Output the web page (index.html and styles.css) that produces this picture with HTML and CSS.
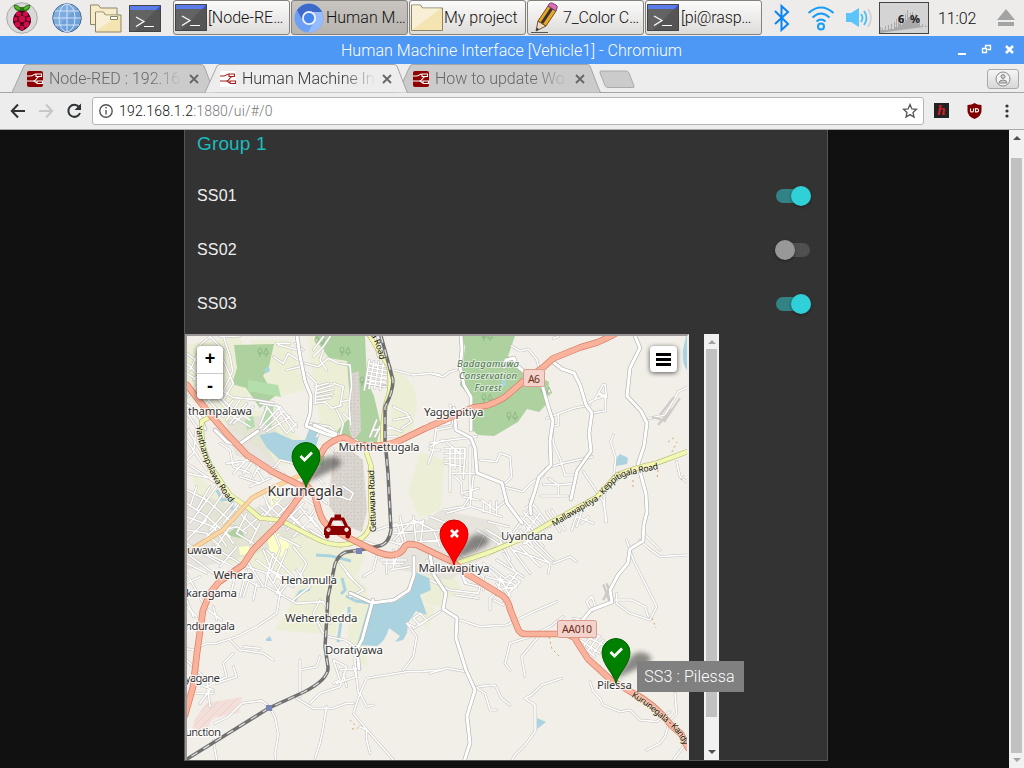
FILE: index.html
```html
<!DOCTYPE html>
<html lang="en">
<head>
<meta charset="utf-8">
<title>Human Machine Interface [Vehicle1]</title>
<link rel="stylesheet" href="styles.css">
</head>
<body>
<svg class="sprites" width="0" height="0">
  <symbol id="terminal" viewBox="0 0 32 27"><path fill="#555" d="M0 0h32v27H0z"/><path fill="#636363" d="M0 0h32L5 27H0z"/><path fill="#3955bd" d="M0 0h32v5H0z"/><path fill="#5a7bea" d="M0 0h32l-5 5H0z"/><path d="M.5.5h31v26H.5z" fill="none" stroke="#444"/><path d="M7 12l8 4.500-8 5M15 21.500h10" fill="none" stroke="#fff" stroke-width="1.200"/></symbol>
  <symbol id="nodered" viewBox="0 0 16 16"><path d="M0 5h3c4 0 3-2 6-2M3 10h3c5 0 2-4.500 7-4.500M6 10c2 0 2 1.500 4 1.500M9 3h5.500v2.500H9zM10 10h5.500v2.500H10zM0 10h4" fill="none" stroke="currentColor" stroke-width="1.100"/></symbol>
  <symbol id="tabshape" viewBox="0 0 204 29"><path d="M0 28.500h1L13 2q.8-1.500 3-1.500h174q2 0 3 1.500l10 26.500z" fill="currentColor"/><path d="M0 28.500h1L13 2q.8-1.500 3-1.500h174q2 0 3 1.500l10 26h1" fill="none" stroke="#a5a5a5"/></symbol>
</svg>

<header class="taskbar">
  <div class="launchers">
    <svg width="32" height="32" viewBox="0 0 32 32"><circle cx="16" cy="16" r="15.300" fill="#d9d9d9" stroke="#aaa"/><path d="M16 9Q9 10 8 5l8 0 8 0q-1 5-8 4z" fill="#2f7d18"/><path d="M15 8C12 9 8 7 8 3q6 0 7 5zM17 8c3 1 7-1 7-5q-6 0-7 5z" fill="#58b52b" stroke="#174d0d" stroke-width=".7"/><path d="M16 9c5-1 9 4 9 10 0 5-6 9-9 10-3-1-9-5-9-10C7 13 11 8 16 9z" fill="#48001a"/><g fill="#d20b49"><circle cx="16" cy="17" r="3.200"/><circle cx="12.500" cy="12" r="2.600"/><circle cx="19.500" cy="12" r="2.600"/><circle cx="9.500" cy="17" r="2.300"/><circle cx="22.500" cy="17" r="2.300"/><circle cx="11.500" cy="22.500" r="2.900"/><circle cx="20.500" cy="22.500" r="2.900"/><circle cx="16" cy="26" r="2.300"/></g></svg>
    <svg class="globe" width="30" height="30" viewBox="0 0 30 30"><circle cx="15" cy="15" r="14.300" fill="#6d9fd9" stroke="#4a6b8f"/><path d="M5 25Q-2 14 5 5Q15-3 25 5z" fill="#8cb6e4" opacity=".55"/><g fill="none" stroke="#dceafa" stroke-width=".9"><ellipse cx="15" cy="15" rx="8" ry="14"/><path d="M15 1v28M1 15h28M3 8h24M3 22h24"/></g></svg>
    <svg class="files" width="32" height="29" viewBox="0 0 32 29"><path d="M.5 20.500V1h8l2 3H27v17z" fill="#f6ecca" stroke="#8c8564"/><path d="M5.500 28V8h8l2 3H31v17z" fill="#f3e4b2" stroke="#8c8564"/><path d="M6 27V8.500h7l2 3h13z" fill="#f8f0d6"/><path d="M20.500 12.500h7v3h-7z" fill="#fff" stroke="#8c8564"/></svg>
    <svg width="32" height="27"><use href="#terminal"/></svg>
  </div>
  <nav class="tasks">
    <div class="task"><svg width="32" height="27"><use href="#terminal"/></svg><span>[Node-RE…</span></div>
    <div class="task current"><svg class="chromium" width="30" height="30" viewBox="0 0 30 30"><circle cx="15" cy="15" r="14.500" fill="#6ba0f5"/><path d="M3 7A14.500 14.500 0 0 1 28 9H15L9 18z" fill="#3d69c9"/><path d="M28 9A14.500 14.500 0 0 1 14 29.500L21 17 19 9z" fill="#95bcff"/><circle cx="15" cy="15" r="7" fill="#f2f5fb"/><circle cx="15" cy="15" r="5.200" fill="#4684ee"/></svg><span>Human M…</span></div>
    <div class="task"><svg width="32" height="27" viewBox="0 0 32 27"><path d="M.5 26.500V1h9l2 3h20v22.500z" fill="#f3e4b2" stroke="#8c8564"/><path d="M1 26V1.500h8l2 3h19z" fill="#f8f0d6"/></svg><span>My project</span></div>
    <div class="task"><svg class="pencil" width="32" height="31" viewBox="0 0 32 31"><path d="M2 30.500h17" stroke="#555"/><path d="M7 29l2-10 8 5z" fill="#f3dcbd" stroke="#665544"/><path d="M9 19L19 4l8 5-10 15z" fill="#eba628" stroke="#70501a"/><path d="M13 21L23 6" stroke="#333" stroke-width="3"/><path d="M19 4l1-2q1-1.500 3-1l4 2q2 1 1 3l-1 3z" fill="#d96eb2" stroke="#80436e"/><path d="M7 29l1-3 2 1z" fill="#222"/></svg><span>7_Color C…</span></div>
    <div class="task"><svg width="32" height="27"><use href="#terminal"/></svg><span>[pi@rasp…</span></div>
  </nav>
  <div class="tray">
    <svg class="bt" width="16" height="28" viewBox="0 0 16 28"><path d="M1 7l13 13-6.500 6V2L14 8 1 20" fill="none" stroke="#0b84f5" stroke-width="2"/></svg>
    <svg class="wifi" width="28" height="26" viewBox="0 0 28 26" fill="none" stroke="#189df5" stroke-width="2"><path d="M1.500 8q12.500-11 25 0M5.500 12.500q8.500-8 17 0M9.500 16.500q4.500-4 9 0"/><circle cx="14" cy="21.500" r="3"/></svg>
    <svg class="sound" width="27" height="22" viewBox="0 0 27 22" fill="none"><path d="M0 6h5l8-5v19l-8-5H0z" fill="#5bc4fa"/><path d="M15 7q3 4 0 8M18 4q5 7 0 14" stroke="#4bbcf5" stroke-width="1.800"/><path d="M22 2q6 9 0 18" stroke="#d2d2d2" stroke-width="1.800"/></svg>
    <div class="cpu"><svg width="48" height="30" viewBox="0 0 48 30"><path d="M0 30v-6h1v3h1v-2h1v2h2v-4h1v4h2v-5h1v4h2v-5h1v5h2v-7h1v5h1v-8h1v8h1v-10h1v7h1v-9h1v10h1v-7h2v4h1v-8h1v6h1v-10h1v7h2v-4h1v6h1v-7h1v6h2v-4h1v6h1v-3h1v7h1v-6h1v8h2v-2h1v3h2v-2h1v1h3z" fill="#aaa"/></svg><b>6 &nbsp;%</b></div>
    <time>11:02</time>
    <svg class="eject" width="18" height="18" viewBox="0 0 18 18" fill="#a3a3a3"><path d="M9 0l9 11H0zM1 13h16v4H1z"/></svg>
  </div>
</header>

<div class="titlebar"><h1>Human Machine Interface [Vehicle1] - Chromium</h1>
  <svg width="58" height="12" viewBox="0 0 58 12" fill="none" stroke="#fff"><path d="M1 10h8" stroke-width="2"/><path d="M25.500 4.500h4v4h-4zM28.500 4v-2.500h5v4h-3" stroke-width="1.300"/><path d="M49 2l7 7M56 2l-7 7" stroke-width="2.500"/></svg>
</div>

<div class="tabs">
  <div class="tab"><svg class="shape" width="204" height="29"><use href="#tabshape"/></svg><svg class="fav" width="16" height="16"><use href="#nodered"/></svg><span>Node-RED : 192.16</span><svg class="x" width="10" height="10" viewBox="0 0 10 10"><path d="M1 1l8 8M9 1L1 9"/></svg></div>
  <div class="tab active"><svg class="shape" width="204" height="29"><use href="#tabshape"/></svg><svg class="fav" width="16" height="16"><use href="#nodered"/></svg><span>Human Machine In</span><svg class="x" width="10" height="10" viewBox="0 0 10 10"><path d="M1 1l8 8M9 1L1 9"/></svg></div>
  <div class="tab"><svg class="shape" width="204" height="29"><use href="#tabshape"/></svg><svg class="fav" width="16" height="16"><use href="#nodered"/></svg><span>How to update Wo</span><svg class="x" width="10" height="10" viewBox="0 0 10 10"><path d="M1 1l8 8M9 1L1 9"/></svg></div>
  <svg class="newtab" width="36" height="19" viewBox="0 0 36 19"><path d="M2 1h25q2 0 3 2l5 13q.5 1.500-1 1.500H9q-2 0-3-2L1 3Q.500 1 2 1z" fill="#cbcbcb" stroke="#aaa"/></svg>
  <div class="profile"><svg width="16" height="16" viewBox="0 0 16 16" fill="#f2f2f2" stroke="#888"><circle cx="8" cy="8" r="7"/><circle cx="8" cy="5.500" r="2" fill="#ccc"/><path d="M4 12q0-3 4-3t4 3z" fill="#ccc"/></svg></div>
</div>

<div class="toolbar">
  <svg width="74" height="18" viewBox="0 0 74 18" fill="none" stroke-width="2"><path d="M15 9H2M8 2.500L1.800 9 8 15.500" stroke="#2e3436"/><path d="M29 9h13M36 2.500L42.200 9 36 15.500" stroke="#c6c8c9"/><path d="M69 5A6 6 0 1 0 70 11" stroke="#2e3436"/><path d="M71 1.500v6.500h-6.500z" fill="#2e3436"/></svg>
  <div class="url"><svg width="14" height="14" viewBox="0 0 14 14" fill="none" stroke="#555" stroke-width="1.400"><circle cx="7" cy="7" r="6.200"/><path d="M7 6v4.500M7 3v1.600"/></svg><p>192.168.1.2<span>:1880/ui/#/0</span></p><svg width="16" height="16" viewBox="0 0 16 16"><path d="M8 1.500l1.900 4.400 4.600.4-3.500 3.100 1 4.700-4-2.500-4 2.500 1-4.700L1.500 6.300l4.600-.4z" fill="none" stroke="#555" stroke-width="1.300"/></svg></div>
  <div class="hext">h</div>
  <svg class="shield" width="15" height="16" viewBox="0 0 15 16"><path d="M.5 2Q5 2 7.500 0 10 2 14.500 2v6q0 5-7 8-7-3-7-8z" fill="#800000"/><path d="M3.500 5.500v2.200q0 1.300 1.500 1.300t1.500-1.300V5.500M8.500 5.500V9q3.500 0 3-1.800 0-1.700-3-1.700z" fill="none" stroke="#fff" stroke-width="1.100"/></svg>
  <svg width="4" height="14" viewBox="0 0 4 14" fill="#333"><circle cx="2" cy="2" r="1.600"/><circle cx="2" cy="7" r="1.600"/><circle cx="2" cy="12" r="1.600"/></svg>
</div>

<main class="page">
  <section class="group">
    <h2>Group 1</h2>
    <div class="row"><span>SS01</span><i class="switch on"></i></div>
    <div class="row"><span>SS02</span><i class="switch"></i></div>
    <div class="row"><span>SS03</span><i class="switch on"></i></div>
    <div class="embed">
      <div class="map">
<svg class="tiles" width="500" height="424" viewBox="187 336 500 424">
<defs>
  <pattern id="rock" width="7" height="7" patternUnits="userSpaceOnUse"><path d="M0 0h7v7H0z" fill="#dcd6d0"/><path d="M0 1l2 1M4 4l2 1M5 0l-1 2M1 5l1-1M3 6l1 0" stroke="#c4beb9" stroke-width=".8"/></pattern>
  <pattern id="hatch" width="8" height="8" patternUnits="userSpaceOnUse"><path d="M0 0h8v8H0z" fill="#f2dfd9"/><path d="M0 8l8-8" stroke="#efc4be" stroke-width=".6"/></pattern>
  <filter id="blur" x="-50%" y="-50%" width="200%" height="200%"><feGaussianBlur stdDeviation="2.800"/></filter>
  <g id="tree" fill="none" stroke="#86b07d" stroke-width=".8"><ellipse cx="-2" cy="-2" rx="2" ry="3"/><path d="M-2-1v5M4-5l-2.500 6h5zM4 1v3"/></g>
  <g id="pin"><path d="M0 0C-2-10-14-19-14-31A14 14 0 0 1 14-31C14-19 2-10 0 0z" stroke-width="1"/></g>
  <path id="shadow" d="M0 0L17-22Q24-31 34-26T30-14z" fill="#222" opacity=".5" filter="url(#blur)"/>
  <g id="minor">
    <!-- north-west -->
    <g transform="translate(180 330) scale(.33333)">
      <path d="M90 20L60 45M130 18l20 60 8 45-28 60 30 20 60 5 60 10M120 20l60-2M20 70l40 30M20 100l60 60M20 130l80 50 50 50 60 40M40 150l50-50M25 200l40-50M50 210l50-55M75 225l50-55M60 180l70 80M130 90l30 70-30 50M100 190l60 70 50 30M160 210l-30 40M180 210l-40 60M200 220l-50 60M220 230l-60 50M60 60l-30 60M240 220l60 10 50 60M260 235l-20 50M300 230l-60 65M310 245l-60 55M330 260l-70 45M260 230l60 80M290 225l50 80M350 280l-30 30"/>
      <path d="M280 80l30 20 15-30 30 20M320 120l40-10M355 60l-60-15M400 60l30-40M450 20l-20 30-30 30M375 100l40 10 30-25 30 15 35 5 5 60-8 60 5 60M380 130l30 30-5 60 30-5 20 20 30-10M410 180l50-15M410 190l50-12M410 200l48-8M410 210l45-7M405 170l40-10M460 160l30 10-10 60M470 240l20 40-10 40M490 250l20 20M485 215l20-5M390 280l60 10 20 20M430 290l-20 30M290 40l40 0M370 60l-25-20M440 120l-20-30 10-30"/>
      <path d="M565 100l55 10M565 112l55 10M565 124l58 10M562 136l60 12M558 148l60 12M560 160l58 10M568 90l-15 90M582 95l-15 80M596 95l-12 80M610 98l-10 80M640 120l60 15 50-5 30 5M640 270l50-10M625 290l40 15M590 270l-20 50M605 280l-20 40M580 300l60-5M640 230l40 20 15 25-30 20M770 280l-10 80-15 40M780 360l-30 0M620 320l30 0"/>
      <path d="M20 250l30 40-10 80-20 20M25 300l60 100M20 330l60 90M20 400l90 60M20 430l100 20M20 480l60 30 80 70M20 520l60 40 70 60M20 560l80 30 40 60M20 600l60 10 40 40M20 630l60-60M30 580l80-110M60 590l70-100M90 600l70-80M130 580l50-60M50 650l60-60M110 650l40-60M50 470l-20 60M90 470l-40 70M160 640l-30-40 40-10 30 20M200 550l-30 60 50 30M190 600l60-50M240 580l-30 60M170 540l60 60"/>
      <path d="M120 340l30 20 10 50 50 20M140 400l80-10 20 30M160 430l50-50M190 430l30-40M220 440l20-40M250 400l60 30M180 440l60 20M210 470l60-25M230 420l20 30M270 430l30-40 40 10M290 500l50-20 40 30M280 510l80 70M260 520l70 70M240 530l70 60M250 560l60-60M270 580l80-80M300 590l70-70M320 600l60-60M340 620l60-60M360 530l50 60M330 560l60 50M380 510l30 20-20 30 40 50M250 490l20 50M340 580l40 40M390 600l50 30M300 620l60 30M280 600l20 50"/>
      <path d="M410 440l20 20M450 490l60 20 10-20-30-20M400 490l40 30M440 340l20 20M480 350l20 10M590 600l60-20 20 60M640 630l60-60 60 30M660 560l20 90M700 560l10 90M730 570l-10 80M640 610l140-10M650 640l130-10M630 590l100-15M760 600l20 50M130 60l-40-40"/>
    </g>
    <!-- north-east -->
    <g transform="translate(430 330) scale(.33333)">
      <path d="M245 48l25 15 25-5 25 30 8 30M370 25l15-5M0 130l40 10 20-15 20-5M475 218l20-10 30-10-20-10 15-25M495 205l10-12 25 10-5-40M525 195l2 47-42 8M480 225l-50 10-40 15-40 15M385 250l0 35-20 5 5 50 20 45 15 50M488 380l-90 20-50 15-10 25-30 15-30 30-60-15M408 435l25 0M460 425l60 90 10 60M355 445l30 20 45-5M385 465v35M332 498h80M380 465l-40-2M550 315l-8 20 15 50-5 50-30 60 5 80M655 265l50-10 40-70 25-12M690 610M640 610l50 50M740 395l10 45 20 15"/>
      <path d="M0 340l60-10 80-10M0 280l60-5 5-20M10 290l50-10M20 300l45-8M60 225l10 60M0 350l40-20 50 40M45 355l60 0 0 30-60 0M60 355v130M75 355v60M90 355v70M105 355l-5 90M45 370h60M45 400l60 10M65 430h70M120 350v150l-20 30-60 10M75 440l20 20 0 30 50-15M100 500l45 10M150 390l50 5 10-25 30 10 5 60-20 20M130 440l-10 90-70 20M125 530l90 30M160 515v30M180 515v30M200 515v35M225 460M230 510l-35 30-40-30M175 575l60 15M0 560l50 20-10 60"/>
      <path d="M270 560l60 60M280 545l60 60M290 530l60 65M300 510l60 80M310 525l-60 80M330 550l-60 80M345 580l-60 60M350 545l40 60M365 540l40 60M270 600l40 50M290 590l50 60M445 540l-20 60M460 530l-20 60M475 560l-20 20M440 560l50 20M140 600l80 50M170 600l50 30M160 620l-20 40M280 640l60-20"/>
    </g>
    <!-- south-west -->
    <g transform="translate(180 540) scale(.33333)">
      <path d="M20 40l80 60M20 70l60 30M20 100l50 90M20 130l40-20M20 180l20 50M80 40l80 40M100 20l80 50M120 80l50-60M20 10l100 60M200 80l60 20 40 60-10 60-60 40-60 30-60 20-30 0-40 20-50-10M150 300l30 30 70 10 30 20M190 320l50 5M250 30l20 50-15 60M260 30l80 80M280 40l-20 70M300 30l-30 70M320 30l-40 100M270 90l60 30-30 40M230 60l80 60M200 60l50 80M180 110l60 30M200 90l-20 80M230 130l-10 50M210 110l-20 60M170 90l-15 60M260 140l90 50 80-5 20 40M340 20l40 50-20 40M350 90l40 50-50 40M290 110l50 30M310 120l-20 40M160 340l-30 30 10 40-60 30M80 420l10 80M50 430l50 20M40 460l60 0M60 490l30-40M160 380l10 30-60 20M85 210l40 30M100 200l10 40M360 360v110M360 390l50-10 10-30M105 550l40-20 40-40 60-8 25 20 15 30 10 50-10 60 5 50M100 600l10 60M350 475l50 30 60 0 40-15 20 0M390 490l30-30 60-20 20-60-40-20M440 500l-10 60-10 50-15 45M460 360l20 60-20 10M480 390l60-5M490 400l10 40M520 380l10 30-60 20"/>
      <path d="M480 70l40 50 30 30-40 20M500 100l30 30M590 50l-10 40-30 20M620 50v50M640 30v60M660 20l-20 60M600 60h80M610 70h60M630 90l60 -10M445 290l50 10 30 20 0 50 10 90M540 460l-20 60 50 60 70 80M540 460l20 40 20-5M540 460l20-45 60-10 60-10 40 0 60-5M700 260l-20-10 30 40-10 60-30 40M700 265l80-50M700 235l20-15 20 20-20 15zM570 640l-10-40 0-30-20-10M420 180l-20 40 30 60M430 230l20 20M20 200l30 30M20 360l60 60M620 0l60 20M740 60l20 40 20 20M540 0l60 20"/>
    </g>
    <!-- south-east -->
    <g transform="translate(430 540) scale(.33333)">
      <path d="M0 120l60 30 85 10 5-20-45-10-10-30M90 90l20 40M75 165l70 10M90 240l60 20 80-5 80-40 70-30M180 210l0-35 20-20M190 180l30 15 20-40 30-30-30-20-30 20-10 40M170 110l70 20M200 150l60-10M200 130l40 60M210 110l30 60M0 400l50-15 60 10M135 440l30 20 15 50 20 0M145 440l50-5 20 40 25 20M395 415l-60 20-30 30-20 10 30 20 0 80-30 40-30 30-15 25M325 290l-50 60 10 60M400 230l-40 30-60 30-60 20-15 60 15 20M480 425l10 30 20 20 10 20 50 20 30-5 30 30 50 5 40-30M735 460l5 60-20 20-15 50-15 20-40 20M760 620l-30 40M630 0l20 20 40 30 80-5M590 0l20 60 40 80 30 60-20 40-60-20-40-30 0-30M555 180l50 0 40 20 10 30M480 205l-10-20 15-15 10 25-10 20M250 30l60 20 50 20M270 20l60 60M290 10l70 60M310 0l60 60M220 40l40 60-30 40M240 20l60 80M200 60l80 50M360 70l-5 30M370 70l50-20 20 15M160 70l60 60M170 50l40-40M180 80l80 60M210 0l30 60M120 70l40 40 0 40M60 20l60 40"/>
      <path d="M450 300l60 40M460 285l60 30M445 310l50 40M490 280l-30 40M505 290l-30 40M520 300l-30 40M440 240l10 20 60 30M430 235l25 5"/>
    </g>
  </g>
  <g id="tertiary">
    <path d="M297 336l3 20 5 25 6 15-1 18-4 12 20 8 18 5 13 2M215 430l12 12 11 3 20-14M461 336l1 14-2 17 4 18 7 12v33M454 408l2 22 15 8 4 10 2 25 25 10 5 20 15 20M504 367l2-7 8-2 2 7 12 10 13 6 8 28 4 12-3 20 1 24-12 12-4 14-5 15 1 8M553 362l9 7 12 4 6 12 6 20 6 8-3 20 2 18-14 20-6 28M635 336l5 12-10 20-3 28 14 15 6 12-3 23-6 18 8 30 1 18-3 12-1 17-13 8-2 14-10 12-8 15 2 12-21 8-10 12"/>
    <path d="M430 555l4 20 12 18-3 16 14 9-1 20 10 32 9 20-8 26 3 27-7 22-3 15M414 557v18l-5 15-15 10-22 3-22-10M373 600l-11 40-5 9 2 20M336 434l-22-9M187 405l13 12 5 12M374 336l5 20"/>
  </g>
  <path id="primary" d="M187 385l21 27 20 23 19 20 26 17 30 15M306 482l10-20 9-15q10-9 20-9.500 8 5 12 7 25 4 43-4l25-12 48-21 14-2q16-6 21-11l15-13 20-14 10-9 27-11 17-5q16-7 20-10M302 493l-22 30-27 27-10 15-24 17-9 11-7 17-6 43-4 34-8 28M306 485l8 8 5 18q4 13 11 16l13 8 30 15q12 6 20 5 9-1 12-9l4-2 8 1 23 11 13 6 14 12 36 22q6 6 7 13l8 20q2 5 8 5h33q16 0 18 8l11 17 23 21 20 12q22 10 40 33l10 9 7 14"/>
  <path id="yellow" d="M210 417l-8 4q-3 30 15 55l13 19 17 12 13 11 20 2 33 17q28 15 49 1 12-9 9-29v-43l-5-15M370 336l19 31q3 20-1 30-6 18-5 44M454 564l36-12 36-15 24-14 47-26 20-22q20-8 40-12l32-12"/>
  <path id="secondary" d="M187 552l36-22 29-32 15-8 39-17"/>
  <path id="rail" d="M381 336l12 44q0 12-8 27v33l3 33 3 57q-2 14-12 16l-19 4-14 2q-7 2-11 12l-7 33-3 50 3 20q1 12-24 25l-35 16-82 51"/>
  <path id="l1" d="M198 426Q203 468 233 503"/>
  <path id="l2" d="M370 330q10 15 12 33"/>
  <path id="l3" d="M374 532L372 469"/>
  <path id="l4" d="M553 525l47-28q10-16 25-23l42-9"/>
  <path id="l5" d="M632 695q16 9 30 22 20 14 25 32"/>
</defs>
<path fill="#f2efe9" d="M187 336h500v424H187z"/>
<path fill="#ecefd5" d="M187 345l52-9 18 35-15 40 30 0 40 40-30 15-95-70zM307 336h50v100l-35 0zM392 370q35 10 20 60l-22 25zM420 452l25 8-5 50-20 8-12-25zM190 470l60 50 80 25-40 30-75-15zM315 540l50 15-30 80-60-5 15-25zM345 568l22 20v80l-18-15zM424 575l30 2 8 12-25 18-15-5zM410 600l25 8-8 22zM250 340l40 0 15 50-40 10zM650 336"/>
<path fill="#dedbd6" opacity=".55" d="M187 490l60 20 50-15 5 40-50 20-65 15zM225 420l40-5 15 20-15 10 15 25-45-15zM400 540l40-30 50 10 20 20-60 40-50-10z"/>
<g fill="#aed1a0"><path d="M234 345l40-1-5 22-6 10 12 20-15 12-14-20-14-4 5-16zM315 336h50l2 45 7 15 7 30-5 20-27 0-12-15 14-15-4-55-18-3-13-18zM462 336h53l-7 20 15 12 26 14-2 22-8 8-12-3-9 13-24 14-16-1-9-8 1-30-10-12 5-38zM225 535l15-10 5 14z"/><path fill="#b4dfac" d="M248 380l30 5 3 12-33-6zM245 420l8-5 2 12-8 3zM264 407l10-2-3 25-8-8zM320 455l5 1-2 10-6-2z"/></g>
<path fill="url(#rock)" d="M350 374l9-3 2 60-8 10-4-12zM333 452l18-2 12 10 4 50-5 22-20-8-13-18 2-30z"/>
<g fill="#aad3df"><path d="M259 435l16-3 18 8 12 0 5-13 10 5-6 22-14 12-21-7-12-11zM415 572l14 6 2 12-11 5 7 20-11-4-8 12-1 10-4 7-8 2 5-6-11-8q-4 14-12 18l-20-1 13-45 20 3q20-6 22-20zM615 460l5-6 8 4-1 6-11 2zM537 718l9 4-9 7zM683 350l4-18v38q-5-5-4-20zM265 368l4-1 1 4-5 3zM502 380h4v6h-4zM266 639l4-3 2 5-6 0z"/><path d="M316 555l15 1 20 5M342 578l3 12-4 4M346 596l10 5 14 2M349 607v10M341 622l-3 20M294 602l6-10 10-3M217 490l5 10 10-2v12" fill="none" stroke="#aad3df" stroke-width="3"/></g>
<path fill="#ffffc8" d="M267 536l12-2 10 10-4 14-15-7zM271 496l8 0 1 8-9 3zM239 547l10-1 1 8-10 1z"/><path fill="url(#hatch)" d="M194 720l13-17 35-6-3 16-26 5-9 16-11-4z"/>
<use href="#tree" x="262" y="353"/><use href="#tree" x="344" y="352"/><use href="#tree" x="319" y="342"/><use href="#tree" x="364" y="382"/><use href="#tree" x="486" y="399"/><use href="#tree" x="511" y="417"/><use href="#tree" x="545" y="392"/><use href="#tree" x="486" y="337"/>
<use href="#minor" class="road minor-case"/><use href="#minor" class="road minor-fill"/>
<path d="M520 133l20 55M530 130l18 52M540 140l-20 40" transform="translate(430 540) scale(.33333)" fill="none" stroke="#ccc9c5" stroke-width="7"/>
<path d="M660 415l14-18M664 422l16-24M658 425l14-16M652 417l14 4" fill="none" stroke="#cfccc8" stroke-width="2.200"/>
<use href="#tertiary" class="road ter-case"/><use href="#tertiary" class="road ter-fill"/>
<use href="#yellow" class="road yel-case"/><use href="#yellow" class="road yel-fill"/>
<use href="#secondary" class="road sec-case"/><use href="#secondary" class="road sec-fill"/>
<use href="#rail" class="road rail"/><use href="#rail" class="road rail-dash"/>
<use href="#primary" class="road pri-case"/><use href="#primary" class="road pri-fill"/>
<path fill="#7b85b5" d="M356 548h6v6h-6zM266 705h6v6h-6z"/>
<path d="M668 442l8-6M672 452l5-10M658 470l-1 10M681 480l3-5M633 480v8M549 637l3 12 7 7M652 618l4 10M350 720l5 5M352 729l6-1" stroke="#cfa76b" stroke-dasharray="2 3" fill="none"/>
<g class="shieldlabel"><rect x="523.500" y="369.500" width="21" height="17" rx="2"/><text x="534" y="382.500" textLength="12">A6</text><rect x="557.500" y="620.500" width="39" height="17" rx="2"/><text x="577" y="633" textLength="30">AA010</text></g>
<g class="roadname"><text><textPath href="#l1" textLength="84">Yanthampalawa Road</textPath></text><text><textPath href="#l2" textLength="32">ya Road</textPath></text><text><textPath href="#l3" textLength="62">Gettuwana Road</textPath></text><text><textPath href="#l4" textLength="123">Mallawapitiya - Keppitigala Road</textPath></text><text><textPath href="#l5" textLength="74">Kurunegala - Kandy</textPath></text></g>
<g class="forest"><text x="488" y="367" textLength="62">Badagamuwa</text><text x="488" y="379" textLength="58">Conservation</text><text x="488" y="391" textLength="27">Forest</text></g>
<g class="place">
<text x="188" y="415" textLength="64">thampalawa</text><text x="338.500" y="451" textLength="81">Muththettugala</text><text x="424" y="415.500" textLength="59.500">Yaggepitiya</text><text x="267.500" y="495.500" textLength="75.500" class="town">Kurunegala</text>
<text x="187" y="553.500" textLength="35">uwawa</text><text x="213.500" y="579" textLength="40">Wehera</text><text x="186" y="596.500" textLength="51">karagama</text><text x="281" y="584" textLength="56">Henamulla</text><text x="185" y="630" textLength="50">nduragala</text><text x="285" y="622" textLength="72.500">Weherebedda</text><text x="325" y="654" textLength="58">Doratiyawa</text><text x="185" y="681.500" textLength="35">yagane</text><text x="185" y="736" textLength="36">unction</text><text x="418.500" y="572" textLength="71">Mallawapitiya</text><text x="501" y="540" textLength="52">Uyandana</text><text x="597" y="688.500" textLength="35">Pilessa</text></g>
<use href="#shadow" x="303" y="484"/><use href="#shadow" x="451" y="562"/><use href="#shadow" x="613" y="680"/>
<g fill="#008000" stroke="#006000"><use href="#pin" x="306" y="487.500"/><use href="#pin" x="616" y="683.500"/></g><use href="#pin" x="454" y="565" fill="red" stroke="#d00000"/>
<g fill="none" stroke="#fff" stroke-width="2.700"><path d="M300.500 456l4 4 7.500-7.500M610.500 652l4 4 7.500-7.500M451 530l7 7M458 530l-7 7"/></g>
<path fill="#8b0000" fill-rule="evenodd" d="M334.500 514.500h6.500v3h3l4 8.500q3 1 3 4v5h-1v2q-.5 1.500-2.200 1.500t-2.300-1.500v-2h-16v2q-.5 1.500-2.300 1.500t-2.200-1.500v-2h-1v-5q0-3 3-4l4-8.500h3.500zM333 520.500l-2.500 5.500h14l-2.500-5.500zM328.500 527.500a2.200 2.200 0 1 0 .1 0M346.500 527.500a2.200 2.200 0 1 0 .1 0"/>
</svg>
        <div class="zoom"><b>+</b><b>-</b></div>
        <div class="layers"><i></i><i></i><i></i></div>
        <div class="tip">SS3 : Pilessa</div>
      </div>
      <div class="scroll inner"><i class="up"></i><div class="thumb"></div><i class="down"></i></div>
    </div>
  </section>
  <div class="scroll outer"><i class="up"></i><div class="thumb"></div><i class="down"></i></div>
</main>
</body>
</html>
```
FILE: styles.css
```css
* { box-sizing: border-box; }
body { margin: 0; width: 1024px; height: 768px; overflow: hidden; display: flex; flex-direction: column; font-family: Roboto, sans-serif; font-weight: 300; font-size: 16px; background: #111; }
svg { display: block; flex: none; }
h1, h2, p { margin: 0; font-weight: inherit; }
.sprites { position: absolute; }

.taskbar { height: 36px; flex: none; display: flex; background: #edeceb; color: #111; }
.launchers { display: flex; align-items: center; width: 173px; padding-left: 6px; }
.globe { margin-left: 14px; }
.files { margin: 0 7px 0 8px; }
.tasks { display: flex; gap: 1px; }
.task { width: 117px; height: 35px; display: flex; align-items: center; border: 1px solid #85817c; border-radius: 3px; background: linear-gradient(#fbfbfb, #dedcd9); padding-left: 1px; white-space: nowrap; font-size: 16px; }
.task span { margin-left: 1px; }
.task.current { background: linear-gradient(#c8c5c1, #b8b4af); }
.task:nth-child(n+4) span { margin-left: 2px; letter-spacing: -.15px; }
.chromium { margin: 0 1px; }
.tray { display: flex; align-items: center; padding-left: 12px; flex: 1; }
.wifi { margin-left: 17px; }
.sound { margin-left: 11px; }
.cpu { position: relative; margin-left: 6px; width: 50px; height: 32px; border: 1px solid #444; background: #d4d4d4; }
.cpu b { position: absolute; left: 18px; top: 9px; font: bold 11px/13px "Noto Sans", sans-serif; color: #222; white-space: nowrap; }
.tray time { margin-left: 9px; width: 42px; letter-spacing: -.1px; }
.eject { margin-left: 17px; }

.titlebar { height: 28px; flex: none; background: #4d97f5; color: #fff; display: flex; align-items: center; }
.titlebar h1 { font-size: 16px; width: 343px; margin-left: 341px; white-space: nowrap; letter-spacing: .04px; }
.titlebar svg { margin-left: 273px; }

.tabs { height: 29px; flex: none; display: flex; padding-left: 11px; background: linear-gradient(#ededed 28px, #a5a5a5 28px); }
.tab { position: relative; width: 204px; margin-right: -11px; height: 29px; display: flex; align-items: center; padding-left: 16px; color: #cbcbcb; }
.tab .shape { position: absolute; left: 0; top: 0; }
.tab.active { z-index: 1; color: #ededed; }
.fav { position: relative; background: #8f0000; color: #fff; border-radius: 2px; }
.active .fav { background: #fff; color: #a32020; }
.tab span { position: relative; width: 134px; margin-left: 6px; white-space: nowrap; color: #666; -webkit-mask-image: linear-gradient(90deg, #000 100px, transparent 134px); mask-image: linear-gradient(90deg, #000 100px, transparent 134px); }
.tab.active span { color: #333; }
.x { position: relative; margin-left: 6px; stroke: #666; stroke-width: 1.800; }
.newtab { margin: 6px 0 0 9px; }
.profile { margin: 5px 5px 0 auto; width: 32px; height: 20px; border: 1px solid #aaa; border-radius: 3px; background: linear-gradient(#f5f5f5, #d8d8d8); display: grid; place-items: center; }

.toolbar { height: 37px; flex: none; display: flex; align-items: center; padding: 0 15px 1px 10px; background: #ededed; border-bottom: 1px solid #aaa; }
.url { width: 832px; height: 28px; margin-left: 8px; display: flex; align-items: center; border: 1px solid #b5b5b5; border-radius: 3px; background: #fff; padding: 0 5px 0 6px; }
.url p { flex: 1; margin-left: 6px; font-size: 14px; letter-spacing: .18px; color: #111; }
.url span { color: #777; }
.hext { flex: none; width: 15px; height: 15px; margin-left: 10px; background: #222; color: #d61f26; font: italic bold 15px/15px "Liberation Serif", serif; text-align: center; }
.shield { margin: 0 23px 0 18px; }

.page { flex: 1; min-height: 0; display: flex; background: #111; font-family: "Liberation Sans", Arial, sans-serif; font-weight: 400; }
.group { width: 644px; height: 631px; margin-left: 184px; background: #333; border: 1px solid #555; border-top: 0; color: #eee; }
.group h2 { height: 38px; line-height: 28px; padding-left: 12px; font-size: 19px; letter-spacing: .15px; color: #1abcbc; }
.row { height: 54px; display: flex; align-items: center; justify-content: space-between; padding: 0 16px 0 12px; }
.row span { padding-top: 2px; letter-spacing: .2px; }
.switch { position: relative; width: 36px; height: 20px; }
.switch::before { content: ""; position: absolute; left: 1px; right: 1px; top: 4px; height: 14px; border-radius: 7px; background: #4f4f4f; }
.switch::after { content: ""; position: absolute; left: 0; top: 1px; width: 20px; height: 20px; border-radius: 50%; background: #989898; box-shadow: 0 1px 3px rgba(0,0,0,.4); }
.switch.on::before { background: #328386; }
.switch.on::after { left: 16px; background: #30d0d8; }

.embed { display: flex; margin-top: 4px; height: 426px; }
.map { position: relative; width: 504px; height: 426px; border: solid #eee; border-width: 2px 2px 0; border-top-color: #9a9696; border-left-color: #9a9696; }
.road { fill: none; stroke-linejoin: round; stroke-linecap: round; }
.minor-case { stroke: #c4c1be; stroke-width: 8px; }
.minor-fill { stroke: #fff; stroke-width: 4.800px; }
.ter-case { stroke: #b2afab; stroke-width: 4.200px; }
.ter-fill { stroke: #fff; stroke-width: 3px; }
.yel-case { stroke: #b3b96c; stroke-width: 5.200px; }
.yel-fill { stroke: #f3f7b4; stroke-width: 4px; }
.sec-case { stroke: #d6a867; stroke-width: 4.600px; }
.sec-fill { stroke: #fbd6a4; stroke-width: 3.600px; }
.pri-case { stroke: #db7d65; stroke-width: 6.600px; }
.pri-fill { stroke: #f9b29c; stroke-width: 5.200px; }
.rail { stroke: #707070; stroke-width: 3.500px; }
.rail-dash { stroke: #ddd; stroke-width: 1.300px; stroke-dasharray: 7 7; stroke-linecap: butt; }
.place, .roadname, .forest, .shieldlabel { font-family: "Noto Sans", sans-serif; font-weight: 400; }
.place text { font-size: 11.500px; fill: #333; stroke: rgba(255,255,255,.75); stroke-width: 2.500px; paint-order: stroke; }
.place .town { font-size: 14px; }
.roadname text { font-size: 8.700px; fill: #111; dominant-baseline: middle; stroke: rgba(255,255,220,.5); stroke-width: 1.200px; paint-order: stroke; }
.forest text { font-size: 9.500px; font-style: italic; text-anchor: middle; fill: #4b6f50; stroke: rgba(255,255,255,.5); stroke-width: 2px; paint-order: stroke; }
.shieldlabel rect { fill: #f3d3cb; stroke: #dc9c8d; }
.shieldlabel text { font-size: 10.500px; text-anchor: middle; fill: #6d2b20; }

.zoom { position: absolute; left: 10px; top: 10px; width: 26px; border-radius: 4px; background: #fff; box-shadow: 0 1px 5px rgba(0,0,0,.65); color: #000; }
.zoom b { display: block; height: 27px; font: bold 18px/25px "Liberation Sans", sans-serif; text-align: center; }
.zoom b + b { height: 26px; border-top: 1px solid #ccc; }
.layers { position: absolute; right: 10px; top: 10px; width: 27px; height: 26px; border-radius: 4px; background: #fff; box-shadow: 0 1px 5px rgba(0,0,0,.65); display: flex; flex-direction: column; align-items: center; justify-content: center; gap: 2px; }
.layers i { width: 15px; height: 3px; background: #000; }
.tip { position: absolute; left: 450px; top: 325px; width: 107px; height: 31px; padding-right: 2px; background: #808080; color: #fff; font: 300 16px/31px Roboto, sans-serif; letter-spacing: .1px; text-align: center; white-space: nowrap; z-index: 2; }

.scroll { width: 15px; background: #f1f1f1; display: flex; flex-direction: column; align-items: center; }
.scroll .thumb { width: 11px; background: #c1c1c1; }
.scroll i { border: 4px solid transparent; }
.scroll .up { border-bottom-color: #505050; border-top: 0; margin: 6px 0 6px; }
.scroll .down { border-top-color: #505050; border-bottom: 0; margin: auto 0 6px; }
.inner { margin-left: 15px; height: 426px; }
.inner .up { border-bottom-color: #a3a3a3; margin: 6px 0 5px; }
.inner .thumb { height: 368px; }
.outer { margin-left: auto; }
.outer .up { margin-bottom: 18px; }
.outer .thumb { height: 595px; }
.outer .down { border-top-color: #a3a3a3; }
```
